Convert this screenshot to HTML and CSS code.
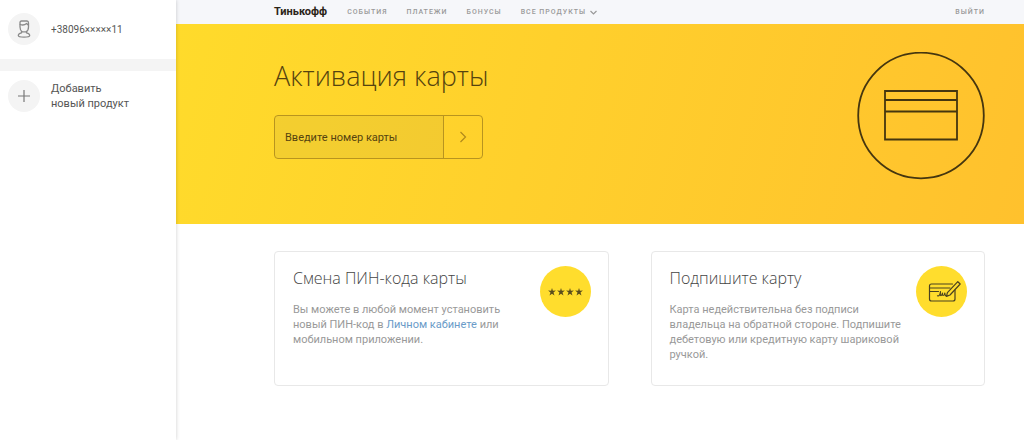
FILE: index.html
```html
<!DOCTYPE html>
<html lang="ru">
<head>
<meta charset="utf-8">
<title>Активация карты</title>
<link rel="stylesheet" href="styles.css">
</head>
<body>
<div class="app">
  <aside class="sidebar">
    <a class="side-item" href="#">
      <span class="side-icon">
        <svg width="32" height="32" viewBox="0 0 32 32" fill="none" stroke="#8a8a8a" stroke-width="1.3" stroke-linejoin="round" stroke-linecap="round">
          <path d="M12 9.500q0-1.500 1.500-1.500h5.500q1.500 0 1.500 2v4q0 3.500-2.300 4.800h-4q-2.200-1.300-2.200-4.800z"/>
          <path d="M12.200 11.500c2.500 1 4.500.6 6.400-1l1.700 1.500M13.500 18.500v1.300c-2 .5-3.200 1.300-3.200 2.700 0 1.200 2.200 1.600 5.700 1.600s5.700-.4 5.700-1.600c0-1.400-1.200-2.200-3.200-2.700v-1.300"/>
        </svg>
      </span>
      <span class="phone">+38096×××××11</span>
    </a>
    <a class="side-item side-add" href="#">
      <span class="side-icon">
        <svg width="32" height="32" viewBox="0 0 32 32" stroke="#777" stroke-width="1.200"><path d="M16 10v12M10 16h12"/></svg>
      </span>
      <span>Добавить<br>новый продукт</span>
    </a>
  </aside>
  <div class="main">
    <header class="topbar">
      <a class="logo" href="#">Тинькофф</a>
      <nav class="nav">
        <a href="#">События</a>
        <a href="#">Платежи</a>
        <a href="#">Бонусы</a>
        <a class="nav-all" href="#">Все продукты
          <svg width="7" height="5" viewBox="0 0 7 5" fill="none" stroke="#999" stroke-width="1.200"><path d="M.5 1l3 3 3-3"/></svg>
        </a>
      </nav>
      <a class="logout" href="#">Выйти</a>
    </header>
    <section class="hero">
      <div>
        <h1>Активация карты</h1>
        <form class="card-form">
          <input type="text" placeholder="Введите номер карты" aria-label="Введите номер карты">
          <button type="button" aria-label="Далее">
            <svg width="8" height="12" viewBox="0 0 8 12" fill="none" stroke="#b08a1c" stroke-width="1.200"><path d="M1.500 1l5 5-5 5"/></svg>
          </button>
        </form>
      </div>
      <svg class="hero-icon" width="128" height="128" viewBox="0 0 128 128" fill="none" stroke="#45360f" stroke-width="1.800">
        <circle cx="64" cy="63.500" r="62.800"/>
        <path d="M28 39h72v48.500H28zM28 48h72M28 59.500h72"/>
      </svg>
    </section>
    <section class="cards">
      <article class="card">
        <div class="card-text">
          <h2>Смена ПИН-кода карты</h2>
          <p>Вы можете в любой момент установить новый ПИН-код в <a href="#">Личном кабинете</a> или мобильном приложении.</p>
        </div>
        <svg class="badge" width="51" height="51" viewBox="0 0 51 51">
          <circle cx="25.500" cy="25.500" r="25.500" fill="#ffdd2d"/>
          <g fill="#5a4d1c">
            <path id="star" d="M12 22l.9 2.700 3-.1-2.400 1.900 1 3-2.500-1.800-2.500 1.800 1-3-2.400-1.900 3 .1z"/>
            <use href="#star" x="9"/><use href="#star" x="18"/><use href="#star" x="27"/>
          </g>
        </svg>
      </article>
      <article class="card">
        <div class="card-text">
          <h2>Подпишите карту</h2>
          <p>Карта недействительна без подписи владельца на обратной стороне. Подпишите дебетовую или кредитную карту шариковой ручкой.</p>
        </div>
        <svg class="badge" width="51" height="51" viewBox="0 0 51 51" fill="none" stroke="#4a4220" stroke-width="1.200" stroke-linejoin="round" stroke-linecap="round">
          <circle cx="25.500" cy="25.500" r="25.500" fill="#ffdd2d" stroke="none"/>
          <path d="M36.500 18H15.500q-2 0-2 2v13q0 2 2 2h21.500q2 0 2-2v-9M13.500 22h20.500M13.500 25.500h9"/>
          <path d="M41.800 15.700l2.400 2.300-10.200 11-3.500 1.400.9-3.700z"/>
          <path d="M21.500 29.800c1.500.7 2.500-.8 3-4.300-.3 2.500-.5 3.500.2 4 1 .3 1.600-1.500 1.800-2.500-.2 1.500 0 2.500.8 2.500s1.300-1.200 1.500-2.500c0 1.800.5 2.800 1.500 3"/>
        </svg>
      </article>
    </section>
  </div>
</div>
</body>
</html>
```
FILE: styles.css
```css
* { box-sizing: border-box; }
body {
  margin: 0;
  background: #fff;
  color: #555;
  font: 11px/15px Roboto, "Liberation Sans", sans-serif;
}
a { color: inherit; text-decoration: none; }
svg { display: block; flex: none; }
h1, h2, p { margin: 0; }
.app { display: flex; min-height: 100vh; }
.sidebar {
  flex: 0 0 176px;
  box-shadow: 0 0 4px rgba(0, 0, 0, .2);
  z-index: 1;
  background: #fff;
}
.side-item {
  display: flex;
  align-items: center;
  gap: 11px;
  padding: 13px 8px 14px;
}
.side-add { border-top: 12px solid #f4f4f4; padding-top: 9px; }
.side-icon { border-radius: 50%; background: #f4f4f4; }
.phone { font-size: 10px; }
.main { flex: 1; min-width: 0; }
.topbar {
  display: flex;
  align-items: center;
  height: 24px;
  padding: 0 39px 0 98px;
  background: #f6f7fa;
  font-size: 7px;
  font-weight: 500;
  letter-spacing: 1px;
  text-transform: uppercase;
  color: #999;
}
.logo {
  flex: 0 0 53px;
  font: 700 11px/20px Roboto, "Liberation Sans", sans-serif;
  letter-spacing: 0;
  text-transform: none;
  color: #2b2417;
}
.nav { display: flex; gap: 19px; margin-left: 20px; }
.nav-all { display: flex; align-items: center; gap: 4px; }
.logout { margin-left: auto; }
.hero {
  display: flex;
  justify-content: space-between;
  align-items: flex-start;
  height: 200px;
  padding: 28px 39px 0 98px;
  background: linear-gradient(105deg, #ffdb2b, #ffc52d 85%, #ffc12d);
}
h1 {
  font: 300 27px/48px "Open Sans", sans-serif;
  color: #55430f;
}
.card-form {
  display: flex;
  width: 209px;
  height: 44px;
  margin-top: 15px;
  border: 1px solid #b8941f;
  border-radius: 4px;
}
.card-form input {
  flex: 1;
  min-width: 0;
  padding: 0 10px;
  border: 0;
  border-right: 1px solid #b8941f;
  border-radius: 3px 0 0 3px;
  background: rgba(160, 150, 80, .12);
  font: inherit;
  color: #55430f;
}
.card-form input::placeholder { color: #55430f; opacity: 1; }
.card-form button {
  display: grid;
  place-items: center;
  width: 38px;
  padding: 0;
  border: 0;
  background: none;
}
.cards {
  display: grid;
  grid-template-columns: 1fr 1fr;
  gap: 42px;
  padding: 27px 39px 27px 98px;
}
.card {
  display: flex;
  justify-content: space-between;
  min-height: 135px;
  padding: 14px 17px 22px 18px;
  border: 1px solid #e8e8e8;
  border-radius: 4px;
}
.card-text { flex: 0 1 232px; }
h2 {
  margin-bottom: 12px;
  font: 300 16px/24px "Open Sans", sans-serif;
  color: #444;
}
.card p { color: #999; }
.card:first-child p { max-width: 210px; }
.card p a { color: #6a9bc8; }
```
